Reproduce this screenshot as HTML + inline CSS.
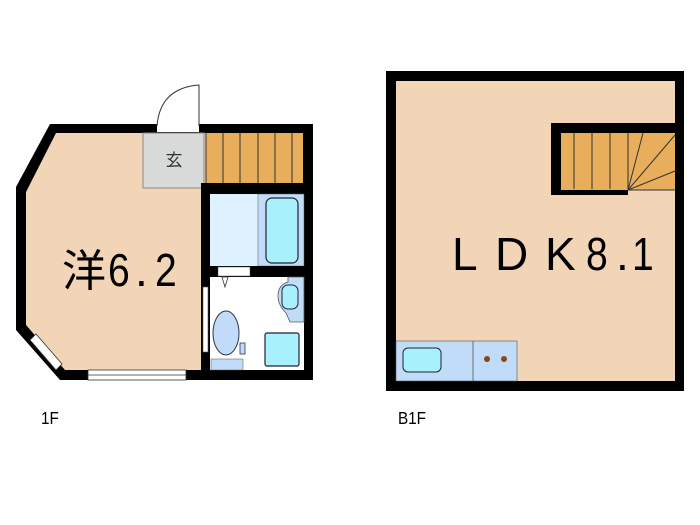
<!DOCTYPE html><html><head><style>body{margin:0;background:#fff}svg{display:block}</style></head><body>
<svg width="700" height="525" viewBox="0 0 700 525" xmlns="http://www.w3.org/2000/svg">
<!-- 1F -->
<polygon points="50,124 313,124 313,380 60,380 16,330 16,187" fill="#000"/>
<polygon points="56,133 303,133 303,370 65,370 26,325 26,192" fill="#f2d5b6"/>
<rect x="143" y="133" width="61" height="55" fill="#d8d9d9" stroke="#888" stroke-width="1"/>
<text x="174" y="166" font-family="Liberation Sans,'Noto Sans CJK JP',sans-serif" font-size="17" text-anchor="middle" fill="#333">玄</text>
<rect x="206" y="133" width="97" height="50" fill="#e8ae5c"/>
<g stroke="#333" stroke-width="1"><line x1="206" y1="133" x2="206" y2="183"/><line x1="223" y1="133" x2="223" y2="183"/><line x1="240" y1="133" x2="240" y2="183"/><line x1="258" y1="133" x2="258" y2="183"/><line x1="275" y1="133" x2="275" y2="183"/><line x1="292" y1="133" x2="292" y2="183"/></g>
<rect x="201" y="183" width="112" height="11" fill="#000"/>
<rect x="201" y="183" width="9" height="197" fill="#000"/>
<rect x="210" y="194" width="48" height="72" fill="#ddf1fe"/>
<rect x="258" y="194" width="46" height="72" fill="#c0dcf8" stroke="#555" stroke-width=".5"/>
<rect x="266" y="198" width="32" height="65" rx="6" fill="#a8f0fc" stroke="#223" stroke-width="1.2"/>
<rect x="201" y="266" width="112" height="11" fill="#000"/>
<rect x="218" y="267" width="32" height="9" fill="#fff" stroke="#555" stroke-width=".5"/>
<rect x="210" y="277" width="94" height="93" fill="#fff"/>
<polygon points="222,277 228,277 225,287" fill="#fff" stroke="#333" stroke-width=".8"/>
<path d="M288,277 H304 V322 H290 L286,313 Q278,305 278,296 Q278,285 288,282 Z" fill="#c0dcf8" stroke="#555" stroke-width=".8"/>
<rect x="282" y="285" width="16" height="24" rx="6" fill="#a8f0fc" stroke="#223" stroke-width="1"/>
<rect x="265" y="333" width="34" height="33" rx="2" fill="#a8f0fc" stroke="#223" stroke-width="1.2"/>
<rect x="211" y="359" width="32" height="11" fill="#c0dcf8" stroke="#555" stroke-width=".5"/>
<ellipse cx="226" cy="333" rx="13" ry="22" fill="#c0dcf8" stroke="#334" stroke-width="1"/>
<rect x="240" y="343" width="5" height="11" fill="#c0dcf8" stroke="#334" stroke-width=".8"/>
<rect x="203" y="287" width="5" height="65" fill="#fff" stroke="#555" stroke-width=".6"/>
<rect x="157" y="118" width="42" height="14" fill="#fff"/>
<path d="M157,126 Q160,88 199,85 V126" fill="#fff" stroke="#333" stroke-width="1"/>
<rect x="88" y="370" width="98" height="10" fill="#fff" stroke="#333" stroke-width=".8"/>
<line x1="88" y1="375" x2="186" y2="375" stroke="#333" stroke-width=".8"/>
<polygon points="30,340 36,334 62,364 56,370" fill="#fff" stroke="#333" stroke-width=".8"/>
<g font-family="Liberation Sans,'Noto Sans CJK JP',sans-serif" fill="#000">
<text x="62" y="286" font-size="44">洋</text>
<text x="108" y="286" font-size="46" transform="translate(108 0) scale(.85 1) translate(-108 0)">6</text>
<text x="135" y="286" font-size="46">.</text>
<text x="155" y="286" font-size="46" transform="translate(155 0) scale(.85 1) translate(-155 0)">2</text>
</g>
<text x="41" y="424" font-family="Liberation Sans,sans-serif" font-size="18" fill="#000" transform="translate(41 0) scale(.85 1) translate(-41 0)">1F</text>
<!-- B1F -->
<rect x="386" y="71" width="298" height="320" fill="#000"/>
<rect x="396" y="81" width="279" height="300" fill="#f2d5b6"/>
<polygon points="551,123 675,123 675,133 628,133 628,195 551,195" fill="#000"/>
<rect x="561" y="133" width="114" height="57" fill="#e8ae5c"/>
<g stroke="#333" stroke-width="1"><line x1="574" y1="133" x2="574" y2="189"/><line x1="592" y1="133" x2="592" y2="189"/><line x1="610" y1="133" x2="610" y2="189"/><line x1="628" y1="133" x2="628" y2="190"/><line x1="628" y1="190" x2="643" y2="133"/><line x1="628" y1="190" x2="675" y2="135"/><line x1="628" y1="190" x2="675" y2="171"/><line x1="628" y1="190" x2="675" y2="190"/></g>
<rect x="396" y="341" width="121" height="40" fill="#c0dcf8" stroke="#555" stroke-width=".6"/>
<line x1="473" y1="341" x2="473" y2="381" stroke="#555" stroke-width=".8"/>
<rect x="403" y="348" width="38" height="24" rx="5" fill="#a8f0fc" stroke="#223" stroke-width="1"/>
<circle cx="487" cy="359" r="3" fill="#8b4513"/><circle cx="504" cy="359" r="3" fill="#8b4513"/>
<g font-family="Liberation Sans,sans-serif" font-size="46" fill="#000">
<text x="452" y="270">L</text>
<text x="495" y="270">D</text>
<text x="545" y="270">K</text>
<text x="586" y="270" transform="translate(586 0) scale(.85 1) translate(-586 0)">8</text>
<text x="616" y="270">.</text>
<text x="632" y="270" transform="translate(632 0) scale(.85 1) translate(-632 0)">1</text>
</g>
<text x="398" y="424" font-family="Liberation Sans,sans-serif" font-size="18" fill="#000" transform="translate(398 0) scale(.85 1) translate(-398 0)">B1F</text>
</svg>
</body></html>
